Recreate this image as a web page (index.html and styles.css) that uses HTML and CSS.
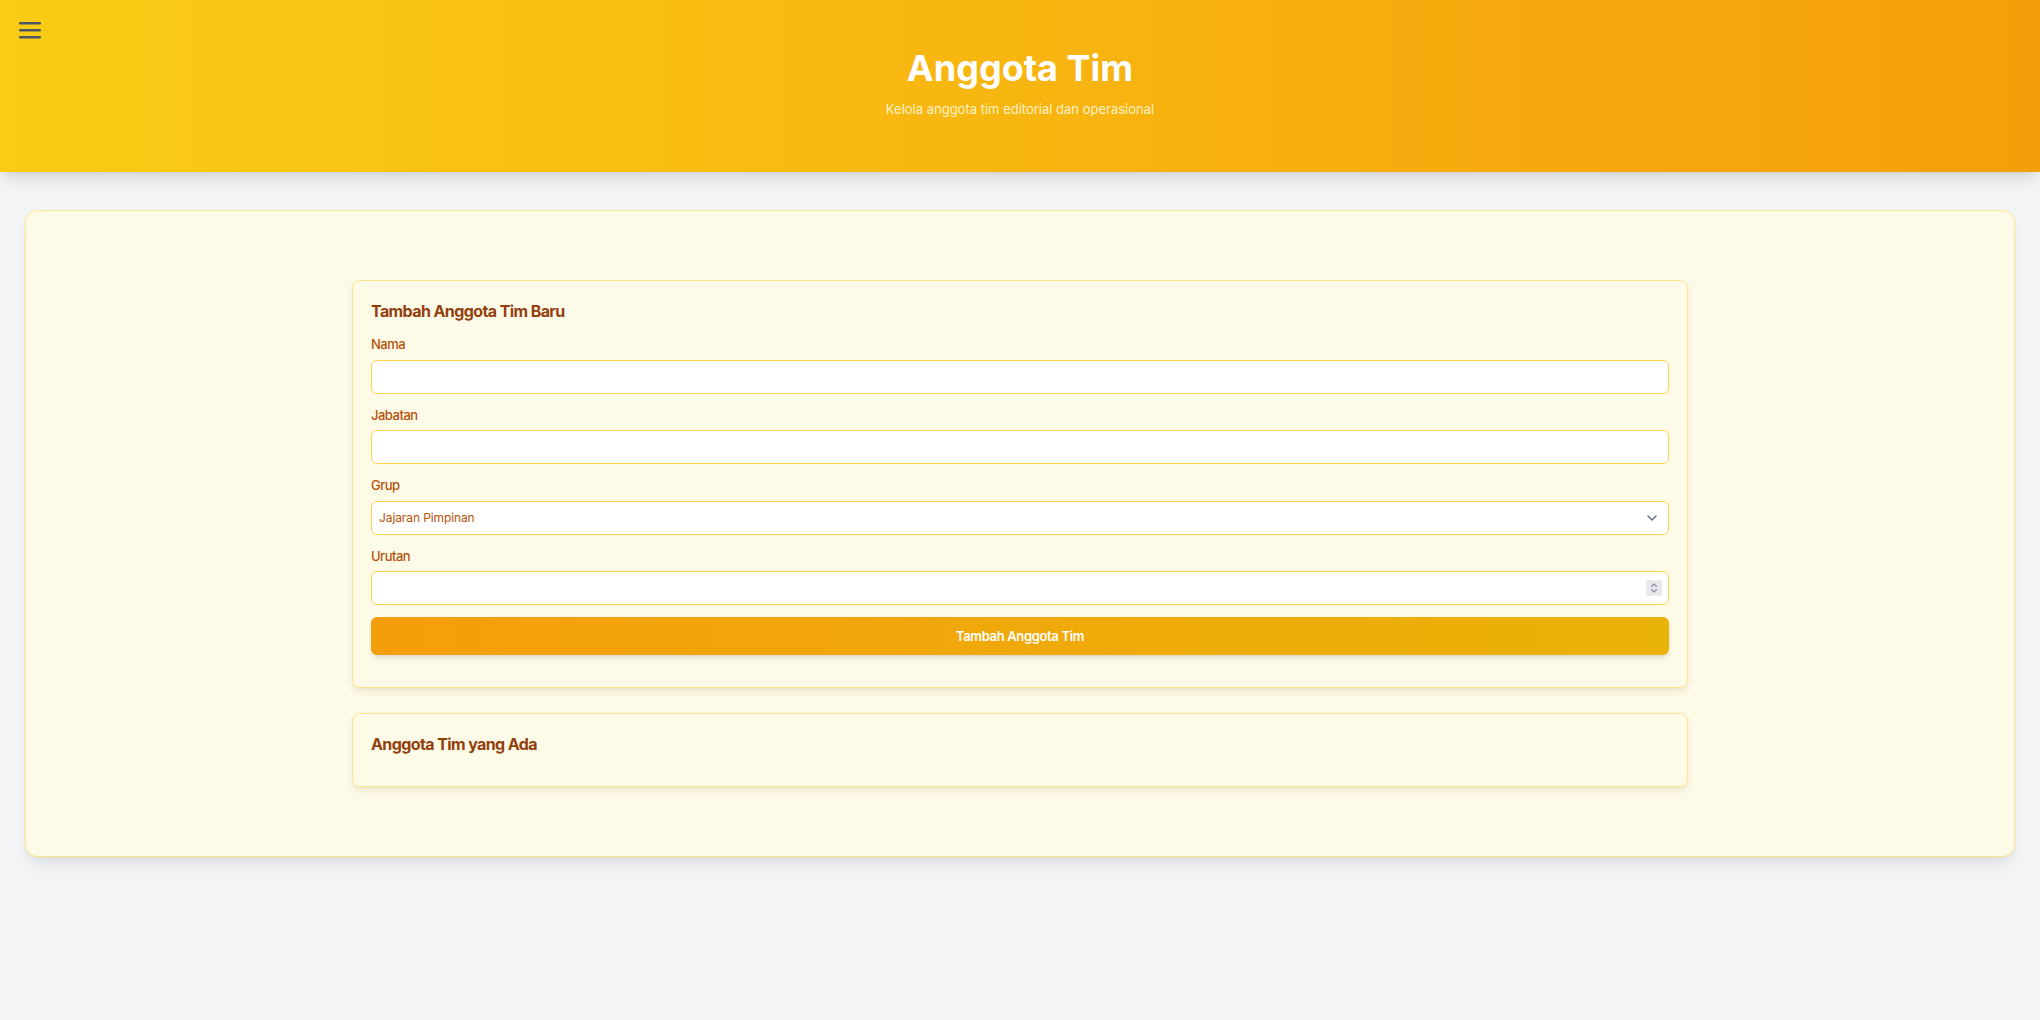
FILE: index.html
```html
<!DOCTYPE html>
<html lang="id">
<head>
<meta charset="utf-8">
<title>Anggota Tim</title>
<link rel="stylesheet" href="styles.css">
</head>
<body>
<header class="hero">
  <button class="menu-btn" aria-label="Menu">
    <svg width="22" height="18" viewBox="0 0 22 18"><rect x="0" y="1" width="22" height="2.6" rx="1.3" fill="#4b5563"/><rect x="0" y="8" width="22" height="2.6" rx="1.3" fill="#4b5563"/><rect x="0" y="15" width="22" height="2.6" rx="1.3" fill="#4b5563"/></svg>
  </button>
  <h1 class="hero-title">Anggota Tim</h1>
  <p class="hero-sub">Kelola anggota tim editorial dan operasional</p>
</header>
<main class="main">
  <section class="panel">
    <div class="container">
      <div class="card">
        <h2 class="card-title">Tambah Anggota Tim Baru</h2>
        <form class="form">
          <div class="field">
            <label class="label">Nama</label>
            <input class="input" type="text">
          </div>
          <div class="field">
            <label class="label">Jabatan</label>
            <input class="input" type="text">
          </div>
          <div class="field">
            <label class="label">Grup</label>
            <div class="control">
              <select class="input select">
                <option>Jajaran Pimpinan</option>
              </select>
              <svg class="chevron" width="10" height="6" viewBox="0 0 10 6"><path d="M1 1l4 4 4-4" fill="none" stroke="#6b7280" stroke-width="1.6" stroke-linecap="round" stroke-linejoin="round"/></svg>
            </div>
          </div>
          <div class="field">
            <label class="label">Urutan</label>
            <div class="control">
              <input class="input number" type="number">
              <span class="spinner">
                <svg width="16" height="16" viewBox="0 0 16 16"><path d="M5.5 6.5L8 4l2.5 2.5" fill="none" stroke="#8b8f99" stroke-width="1.1" stroke-linecap="round" stroke-linejoin="round"/><path d="M5.5 9.5L8 12l2.5-2.5" fill="none" stroke="#8b8f99" stroke-width="1.1" stroke-linecap="round" stroke-linejoin="round"/></svg>
              </span>
            </div>
          </div>
          <button type="button" class="submit">Tambah Anggota Tim</button>
        </form>
      </div>
      <div class="card">
        <h2 class="card-title">Anggota Tim yang Ada</h2>
      </div>
    </div>
  </section>
</main>
</body>
</html>
```
FILE: styles.css
```css
* { box-sizing: border-box; }
html, body { margin: 0; padding: 0; }
body {
  background: #f3f4f6;
  font-family: Inter, "Noto Sans", "Liberation Sans", sans-serif;
  min-height: 1020px;
}
.hero {
  position: relative;
  height: 172px;
  background: linear-gradient(to right, #facc15, #f59e0b);
  box-shadow: 0 10px 15px -3px rgba(0,0,0,0.1), 0 4px 6px -4px rgba(0,0,0,0.1);
  text-align: center;
  padding-top: 48px;
}
.menu-btn {
  position: absolute;
  left: 19px;
  top: 21px;
  padding: 0;
  border: 0;
  background: none;
  line-height: 0;
}
.hero-title {
  margin: 0;
  font-size: 36px;
  line-height: 40px;
  font-weight: 700;
  color: #ffffff;
}
.hero-sub {
  margin: 11px 0 0;
  font-size: 13px;
  line-height: 20px;
  color: #fef3c7;
}
.main {
  padding: 38px 25px;
}
.panel {
  background: #fefae8;
  border: 1.5px solid #fde68a;
  border-radius: 12px;
  box-shadow: 0 10px 15px -3px rgba(0,0,0,0.08), 0 4px 6px -4px rgba(0,0,0,0.08);
  padding: 69px 0 69px;
}
.container {
  width: 1336px;
  margin: 0 auto;
  display: flex;
  flex-direction: column;
  gap: 25px;
}
.card {
  background: #fefae8;
  border: 1px solid #fde68a;
  border-radius: 8px;
  box-shadow: 0 4px 8px -1px rgba(120,100,20,0.12), 0 2px 4px -2px rgba(120,100,20,0.1);
  padding: 18px 18px 30px;
}
.card:first-child { padding-bottom: 32px; }
.card-title {
  margin: 0;
  font-size: 16px;
  line-height: 24px;
  font-weight: 700;
  letter-spacing: -0.6px;
  color: #92400e;
}
.form {
  margin-top: 11px;
  display: flex;
  flex-direction: column;
  gap: 11px;
}
.field {
  display: flex;
  flex-direction: column;
}
.label {
  font-size: 13px;
  line-height: 20px;
  font-weight: 500;
  letter-spacing: -0.5px;
  color: #b45309;
  margin-bottom: 5.5px;
}
.control { position: relative; }
.input {
  display: block;
  width: 100%;
  height: 34px;
  background: #ffffff;
  border: 1px solid #fcd34d;
  border-radius: 6px;
  padding: 0 8px;
  font-family: inherit;
  font-size: 12px;
  letter-spacing: -0.1px;
  color: #b45309;
  outline: none;
}
.select {
  -webkit-appearance: none;
  appearance: none;
  padding-left: 7px;
}
.number { -moz-appearance: textfield; }
.number::-webkit-inner-spin-button,
.number::-webkit-outer-spin-button { -webkit-appearance: none; margin: 0; }
.chevron {
  position: absolute;
  right: 12px;
  top: 14px;
}
.spinner {
  position: absolute;
  right: 7px;
  top: 9px;
  width: 16px;
  height: 16px;
  background: #e8e8ee;
  border-radius: 2px;
  line-height: 0;
}
.submit {
  margin-top: 1px;
  height: 38px;
  border: 0;
  border-radius: 6px;
  background: linear-gradient(to right, #f59e0b, #eab308);
  color: #ffffff;
  font-family: inherit;
  font-size: 13px;
  font-weight: 600;
  letter-spacing: -0.35px;
  box-shadow: 0 4px 6px -1px rgba(0,0,0,0.1), 0 2px 4px -2px rgba(0,0,0,0.1);
}
```
